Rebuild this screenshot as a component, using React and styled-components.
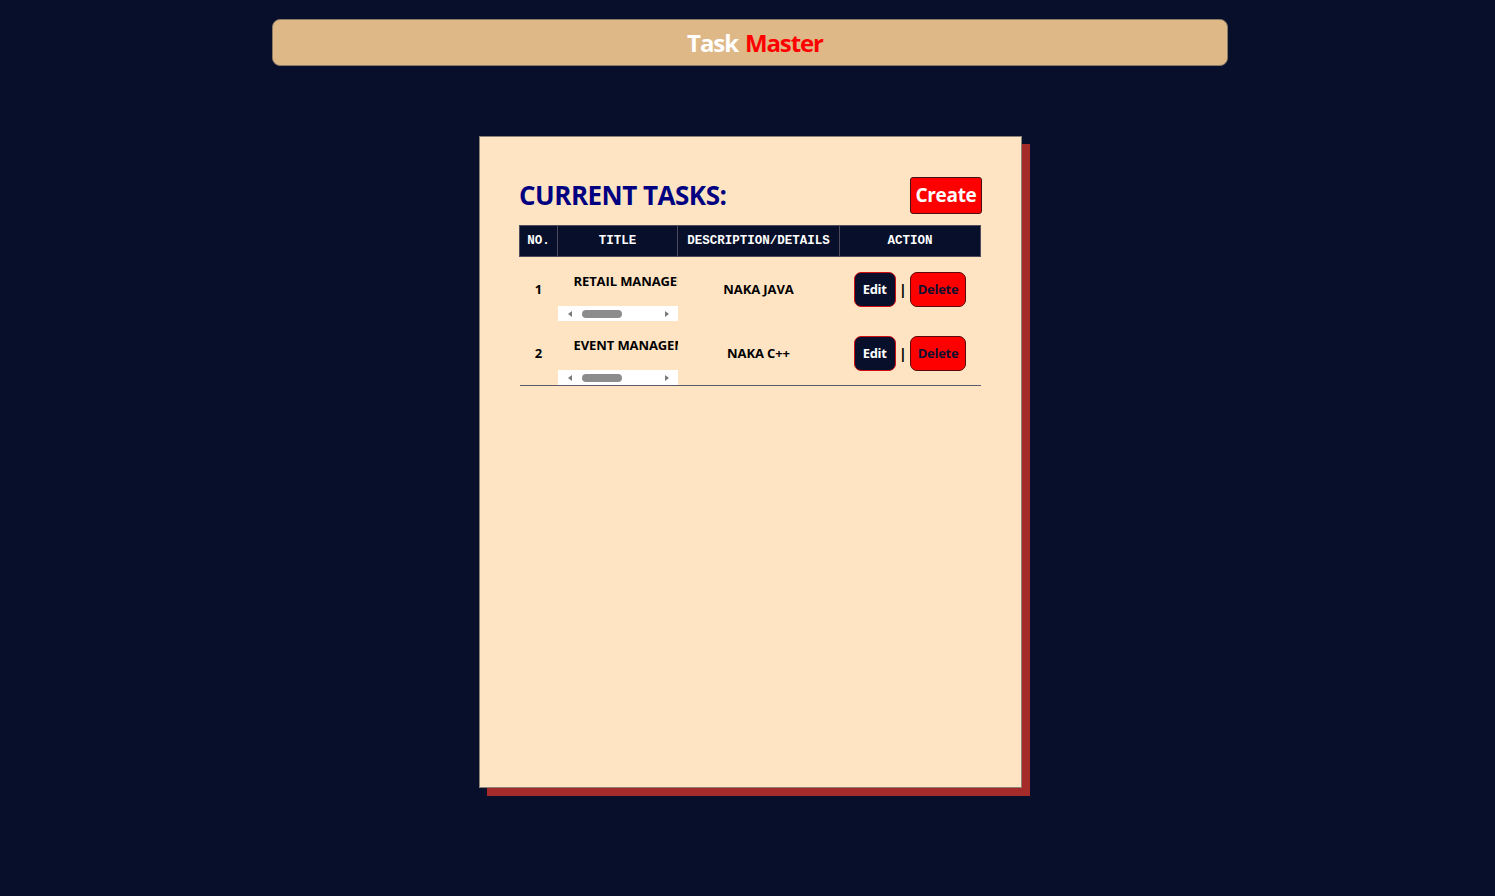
import React from 'react';
import styled, { createGlobalStyle } from 'styled-components';

const GlobalStyle = createGlobalStyle`
  html, body {
    margin: 0;
    padding: 0;
    background-color: #070f2b;
    font-family: 'Open Sans', 'Noto Sans', sans-serif;
  }
`;

const Page = styled.div`
  min-height: 896px;
  padding-top: 19px;
  box-sizing: border-box;
`;

const Header = styled.header`
  width: 956px;
  height: 47px;
  margin-left: 272px;
  padding-left: 10px;
  box-sizing: border-box;
  background-color: #deb887;
  border: 1px solid #8a7a66;
  border-radius: 8px;
  display: flex;
  align-items: center;
  justify-content: center;
`;

const Brand = styled.h1`
  margin: 0;
  font-size: 24px;
  font-weight: 700;
  letter-spacing: -1.1px;
  color: ${props => props.color};
  & + & {
    margin-left: 7px;
  }
`;

const Card = styled.main`
  width: 543px;
  height: 652px;
  margin: 70px 0 0 479px;
  box-sizing: border-box;
  background-color: #ffe4c4;
  border: 1px solid #8c8378;
  box-shadow: 8px 8px 0 #a52a2a;
  padding: 39px 39px;
`;

const TopRow = styled.div`
  display: flex;
  align-items: center;
  justify-content: space-between;
  height: 38px;
  margin-bottom: 11px;
`;

const Heading = styled.h2`
  margin: 0;
  font-size: 26px;
  font-weight: 700;
  color: #000080;
  letter-spacing: -0.5px;
`;

const CreateButton = styled.button`
  height: 37px;
  width: 72px;
  padding: 0;
  background-color: #ff0000;
  color: #fff;
  border: 1px solid #4a1010;
  border-radius: 3px;
  font-family: inherit;
  font-size: 19px;
  font-weight: 700;
  letter-spacing: -0.3px;
`;

const Table = styled.table`
  width: 462px;
  border-collapse: collapse;
  table-layout: fixed;
  border-bottom: 1px solid #5b5b6b;
`;

const Th = styled.th`
  width: ${props => props.w}px;
  height: 30px;
  padding: 0;
  background-color: #070f2b;
  color: #fff;
  border: 1px solid #4c4c5c;
  font-family: 'Liberation Mono', 'Courier New', monospace;
  font-size: 12.5px;
  font-weight: 700;
  text-align: center;
`;

const Td = styled.td`
  height: 64px;
  padding: 0;
  text-align: center;
  vertical-align: middle;
  font-size: 13px;
  font-weight: 700;
  letter-spacing: -0.1px;
  color: #000;
`;

const TitleBox = styled.div`
  width: 100%;
  height: 64px;
  display: flex;
  flex-direction: column;
`;

const TitleText = styled.div`
  flex: 1;
  overflow: hidden;
  white-space: nowrap;
  text-align: left;
  padding: 15px 0 0 16px;
  line-height: 19px;
`;

const ScrollTrack = styled.div`
  height: 15px;
  background-color: #fff;
  display: flex;
  align-items: center;
  padding: 0 9px 0 10px;
`;

const Arrow = styled.span`
  width: 0;
  height: 0;
  border-top: 3.5px solid transparent;
  border-bottom: 3.5px solid transparent;
  ${props =>
    props.right
      ? 'border-left: 4px solid #7a7a7a; margin-left: auto;'
      : 'border-right: 4px solid #7a7a7a;'}
`;

const Thumb = styled.span`
  width: 40px;
  height: 8px;
  margin-left: 10px;
  border-radius: 4px;
  background-color: #8c8c8c;
`;

const Actions = styled.div`
  display: flex;
  align-items: center;
  justify-content: center;
  gap: 3px;
`;

const Sep = styled.span`
  font-size: 15px;
  color: #000;
`;

const ActionButton = styled.button`
  height: 35px;
  padding: 0 ${props => (props.danger ? 7 : 8)}px;
  border-radius: 7px;
  border: 1px solid ${props => (props.danger ? '#5a0a0a' : '#d01010')};
  background-color: ${props => (props.danger ? '#ff0000' : '#070f2b')};
  color: ${props => (props.danger ? '#101030' : '#fff')};
  font-family: inherit;
  font-size: 13px;
  font-weight: 700;
  letter-spacing: -0.3px;
`;

const tasks = [
  { id: 1, title: 'RETAIL MANAGEMENT', desc: 'NAKA JAVA' },
  { id: 2, title: 'EVENT MANAGEMENT', desc: 'NAKA C++' }
];

export default function App() {
  return (
    <>
      <GlobalStyle />
      <Page>
        <Header>
          <Brand color="#ffffff">Task</Brand>
          <Brand color="#ff0000">Master</Brand>
        </Header>
        <Card>
          <TopRow>
            <Heading>CURRENT TASKS:</Heading>
            <CreateButton>Create</CreateButton>
          </TopRow>
          <Table>
            <thead>
              <tr>
                <Th w={37}>NO.</Th>
                <Th w={119}>TITLE</Th>
                <Th w={161}>DESCRIPTION/DETAILS</Th>
                <Th w={140}>ACTION</Th>
              </tr>
            </thead>
            <tbody>
              {tasks.map(t => (
                <tr key={t.id}>
                  <Td>{t.id}</Td>
                  <Td>
                    <TitleBox>
                      <TitleText>{t.title}</TitleText>
                      <ScrollTrack>
                        <Arrow />
                        <Thumb />
                        <Arrow right />
                      </ScrollTrack>
                    </TitleBox>
                  </Td>
                  <Td>{t.desc}</Td>
                  <Td>
                    <Actions>
                      <ActionButton>Edit</ActionButton>
                      <Sep>|</Sep>
                      <ActionButton danger>Delete</ActionButton>
                    </Actions>
                  </Td>
                </tr>
              ))}
            </tbody>
          </Table>
        </Card>
      </Page>
    </>
  );
}
